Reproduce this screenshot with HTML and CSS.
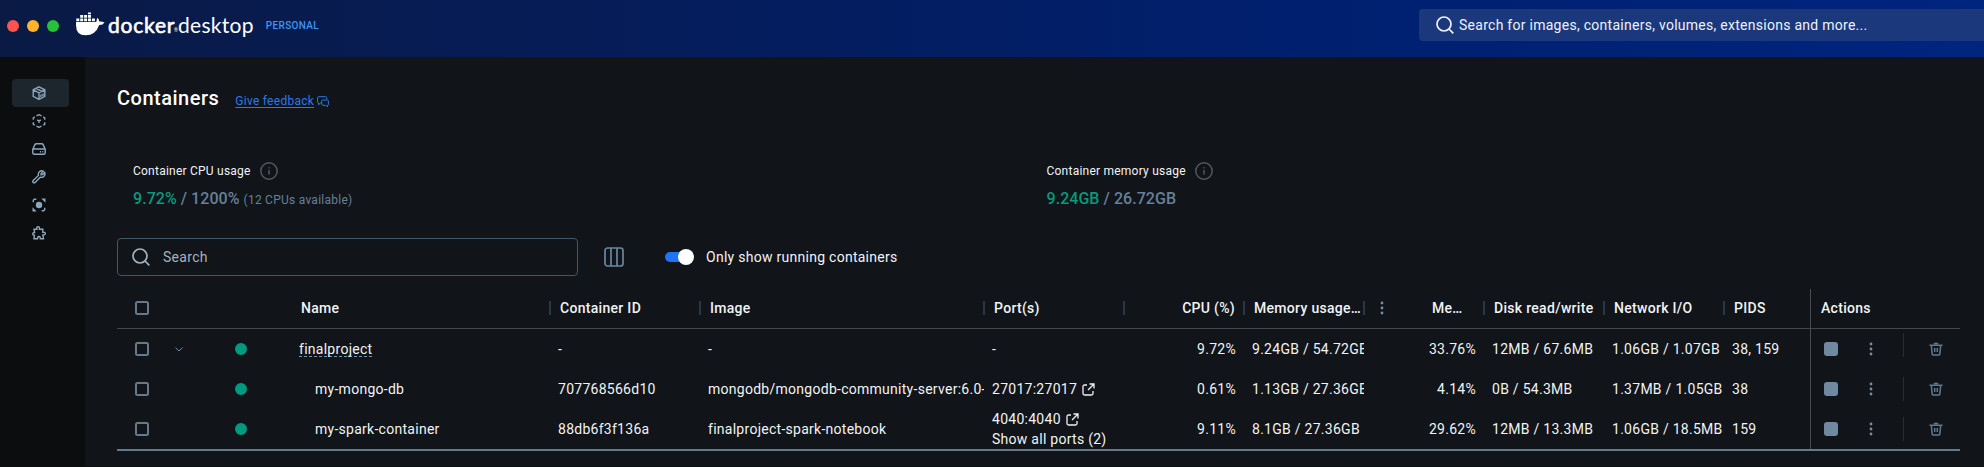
FILE: index.html
```html
<!DOCTYPE html>
<html lang="en">
<head>
<meta charset="utf-8">
<title>Docker Desktop</title>
<link rel="stylesheet" href="styles.css">
</head>
<body>
<svg class="defs" width="0" height="0">
  <symbol id="search" viewBox="0 0 18 18"><circle cx="8" cy="8" r="7"/><path d="M13 13l4.300 4.300"/></symbol>
  <symbol id="info" viewBox="0 0 18 18"><circle cx="9" cy="9" r="8.200"/><path d="M9 8v4.600M9 5.200v1.400"/></symbol>
  <symbol id="trash" viewBox="0 0 14 14"><path d="M.5 3.200h13M4.800 1.600h4.400M2.300 3l.8 8.600q.1 1.500 1.400 1.500h5q1.300 0 1.400-1.500L11.700 3M5.700 6v4M8.300 6v4"/></symbol>
  <symbol id="kebab" viewBox="0 0 4 14"><circle cx="2" cy="2" r="1.400"/><circle cx="2" cy="7" r="1.400"/><circle cx="2" cy="12" r="1.400"/></symbol>
  <symbol id="external" viewBox="0 0 13 13"><path d="M5 2H2.500Q1 2 1 3.500v7Q1 12 2.500 12h7q1.500 0 1.500-1.500V8M7.500 1H12v4.500M12 1L6 7"/></symbol>
</svg>

<header class="topbar">
  <div class="lights"><i class="red"></i><i class="amber"></i><i class="green"></i></div>
  <div class="brand">
    <svg class="whale" viewBox="0 0 29 24"><path d="M0 9h19.500q1.600-.5 1.300-2.600Q20.500 5.800 21.500 5q1.800 1.300 1.700 3.600 2.300-.4 5.300.8-1.600 2.600-5.300 2.500Q19.500 22.300 9.500 22.300 0 22.300 0 12z"/><path d="M.3 8.200h3v-2.700h-3zM4.200 8.200h3v-2.700h-3zM8.100 8.200h3v-2.700h-3zM12 8.200h3v-2.700h-3zM15.900 8.200h3v-2.700h-3zM4.200 4.700h3V2h-3zM8.100 4.700h3V2h-3zM12 4.700h3V2h-3zM12 1.300h3V-.4h-3z"/></svg>
    <span class="docker">docker</span><span class="reg">®</span><span class="desktop">desktop</span>
    <span class="plan">PERSONAL</span>
  </div>
  <div class="global-search"><svg class="ic"><use href="#search"/></svg><span>Search for images, containers, volumes, extensions and more...</span></div>
</header>

<div class="shell">
  <nav class="sidebar">
    <a class="active"><svg viewBox="0 0 14 14"><path d="M7 .8l5.800 3v6.600L7 13.400 1.200 10.400V3.800zM1.200 3.800L7 6.800l5.800-3M7 6.800v6.600M4 2.300l5.900 3"/><path d="M9 8.500v2.400M11 7.500v2.400"/></svg></a>
    <a><svg viewBox="0 0 14 14"><path d="M4.500 1.900L7 .7l2.500 1.200M11.200 2.900l1.500.9v2M12.700 8.300v2l-1.500.9M9.500 12.100L7 13.300l-2.500-1.200M2.800 11.200l-1.500-.9v-2M1.300 5.800v-2l1.500-.9M5.200 6L7 6.900 8.800 6M7 6.900V9"/></svg></a>
    <a><svg viewBox="0 0 14 14"><path d="M.8 7.200L2.900 2.600q.4-.9 1.300-.9h5.600q.9 0 1.300.9l2.100 4.600v3.500q0 1.500-1.500 1.500H2.300q-1.500 0-1.500-1.500zM.8 7h12.400M8 9.700h1M10.300 9.700h1"/></svg></a>
    <a><svg viewBox="0 0 14 14"><path d="M11.300 1.200Q8.800.2 7.200 1.900 5.800 3.300 6.500 5.400L1.200 10.500q-.9 1 0 1.900t1.900 0l5.200-5.200q2 .6 3.500-.8 1.800-1.700.9-4L10.500 4.600 9 4.800 9.200 3.300z"/></svg></a>
    <a><svg viewBox="0 0 14 14"><circle class="solid" cx="7" cy="7" r="3.200"/><path class="solid" d="M9.300.5h4.200v4.200zM.5 9.300v4.200h4.200z"/><path d="M1.300 4.200V2.200l1-.9h2M12.700 9.800v2l-1 .9h-2"/></svg></a>
    <a><svg viewBox="0 0 14 14"><path d="M2 3.200h2.900Q4.400.8 6.100.8T7.400 3.200h3.400v3q2.500-.2 2.500 1.300t-2.500 1.400l.7 3.800H8.300Q8.400 10.500 7 10.500T5.500 12.700H2l.4-3.400Q.6 9.100.7 7.800T2.600 6.500z"/></svg></a>
  </nav>

  <main>
    <div class="heading"><h1>Containers</h1><a class="feedback">Give feedback</a><svg class="chat" viewBox="0 0 12 12"><path d="M4.500 7H3.500L1.500 8.800V7Q.6 6.800.6 6V1.800Q.6.700 1.700.7h7Q9.800.7 9.800 1.800V3M5.800 4h4.500q1.100 0 1.100 1.100v3.200q0 1-1 1v1.600L8.800 9.300h-3q-1.100 0-1.100-1V5.100Q4.700 4 5.800 4z"/></svg></div>

    <section class="usage">
      <div><p class="label">Container CPU usage <svg><use href="#info"/></svg></p><p class="value"><b>9.72%</b> / 1200% <small>(12 CPUs available)</small></p></div>
      <div><p class="label">Container memory usage <svg><use href="#info"/></svg></p><p class="value"><b>9.24GB</b> / 26.72GB</p></div>
    </section>

    <div class="tools">
      <div class="search"><svg class="ic"><use href="#search"/></svg><span>Search</span></div>
      <svg class="columns" viewBox="0 0 20 20"><rect x="1" y="1" width="18" height="18" rx="2.500"/><path d="M7 1v18M13 1v18"/></svg>
      <span class="toggle"><i></i></span><span class="toggle-label">Only show running containers</span>
    </div>

    <div class="table">
      <div class="row head">
        <div><i class="box"></i></div><div></div><div></div><div class="sep name">Name</div><div class="sep">Container ID</div><div class="sep">Image</div><div class="sep">Port(s)</div><div class="sep num">CPU (%)</div><div class="sep mem">Memory usage…</div><div class="sep memp"><svg class="kebab"><use href="#kebab"/></svg><span>Me…</span></div><div class="sep">Disk read/write</div><div class="sep">Network I/O</div><div>PIDS</div><div class="act">Actions</div>
      </div>
      <div class="row">
        <div><i class="box"></i></div><div><svg class="chev" viewBox="0 0 8 5"><path d="M.5.6L4 4 7.500.6"/></svg></div><div><i class="dot"></i></div><div class="name"><span class="group">finalproject</span></div><div>-</div><div>-</div><div>-</div><div class="num">9.72%</div><div>9.24GB / 54.72GB</div><div class="num">33.76%</div><div>12MB / 67.6MB</div><div>1.06GB / 1.07GB</div><div>38, 159</div>
        <div class="act"><i class="stop"></i><svg class="kebab"><use href="#kebab"/></svg><i class="rule first"></i><svg class="trash"><use href="#trash"/></svg></div>
      </div>
      <div class="row">
        <div><i class="box"></i></div><div></div><div><i class="dot"></i></div><div class="name child">my-mongo-db</div><div>707768566d10</div><div>mongodb/mongodb-community-server:6.0-</div><div>27017:27017<svg class="ext"><use href="#external"/></svg></div><div class="num">0.61%</div><div>1.13GB / 27.36GB</div><div class="num">4.14%</div><div>0B / 54.3MB</div><div>1.37MB / 1.05GB</div><div>38</div>
        <div class="act"><i class="stop"></i><svg class="kebab"><use href="#kebab"/></svg><i class="rule"></i><svg class="trash"><use href="#trash"/></svg></div>
      </div>
      <div class="row">
        <div><i class="box"></i></div><div></div><div><i class="dot"></i></div><div class="name child">my-spark-container</div><div>88db6f3f136a</div><div>finalproject-spark-notebook</div><div class="ports"><span>4040:4040<svg class="ext"><use href="#external"/></svg></span><span>Show all ports (2)</span></div><div class="num">9.11%</div><div>8.1GB / 27.36GB</div><div class="num">29.62%</div><div>12MB / 13.3MB</div><div>1.06GB / 18.5MB</div><div>159</div>
        <div class="act"><i class="stop"></i><svg class="kebab"><use href="#kebab"/></svg><i class="rule"></i><svg class="trash"><use href="#trash"/></svg></div>
      </div>
    </div>
  </main>
</div>
</body>
</html>
```
FILE: styles.css
```css
* { box-sizing: border-box; }
body { margin: 0; height: 467px; overflow: hidden; background: #111418; color: #f0f3f5; font: 14px/20px Roboto, sans-serif; letter-spacing: .27px; display: flex; flex-direction: column; border-bottom: 1px solid #0b0d0f; }
svg { fill: none; stroke: currentColor; flex: none; }
.defs { position: absolute; }
p, h1 { margin: 0; }

.topbar { height: 57px; flex: none; display: flex; align-items: flex-start; background: linear-gradient(90deg, #0a1a45, #001f6e 65%, #00257f); }
.lights { display: flex; gap: 8px; padding: 20px 0 0 7px; }
.lights i { width: 12px; height: 12px; border-radius: 50%; }
.red { background: #ff544d; }
.amber { background: #ffb429; }
.green { background: #25c138; }
.brand { display: flex; align-items: flex-start; padding: 13px 0 0 17px; color: #fff; }
.whale { width: 29px; height: 24px; fill: #fff; stroke: none; overflow: visible; }
.docker, .desktop { font: 21px/24px Lato, sans-serif; letter-spacing: .3px; }
.docker { width: 66px; margin-left: 3px; letter-spacing: .8px; -webkit-text-stroke: .6px #fff; }
.reg { font-size: 5px; line-height: 34px; letter-spacing: 0; }
.plan { margin: 3px 0 0 12px; color: #3e94fb; font-size: 10px; font-weight: 500; line-height: 20px; letter-spacing: .35px; }
.global-search { margin: 9px 0 0 auto; width: 565px; height: 32px; display: flex; align-items: center; background: #1b387d; border-radius: 4px 0 0 4px; padding-left: 17px; gap: 5px; color: #eef2fa; }
.ic { width: 18px; height: 18px; stroke-width: 1.700; }

.shell { flex: 1; display: flex; min-height: 0; }
.sidebar { width: 85px; flex: none; background: #0c0d0f; padding: 22px 16px 0 12px; display: flex; flex-direction: column; color: #8ba6bd; }
.sidebar a { width: 57px; height: 28px; border-radius: 4px; display: flex; align-items: center; justify-content: center; padding-right: 3px; }
.sidebar .active { background: #1d262d; }
.sidebar svg { width: 14px; height: 14px; stroke-width: 1.400; }
.sidebar .solid { fill: currentColor; stroke: none; }

main { flex: 1; padding: 26px 24px 0 32px; min-width: 0; }
.heading { height: 30px; display: flex; align-items: center; }
h1 { font-size: 20px; font-weight: 500; line-height: 30px; color: #fff; letter-spacing: .5px; }
.feedback { color: #2a78f0; font-size: 12px; text-decoration: underline; text-underline-offset: 2px; margin: 6px 0 0 16px; }
.chat { width: 12px; height: 12px; color: #2a78f0; margin: 8px 0 0 3px; }

.usage { display: grid; grid-template-columns: 913.500px 1fr; padding: 47px 0 0 16px; height: 125px; }
.label { display: flex; align-items: center; font-size: 12px; height: 22px; gap: 9px; letter-spacing: .23px; }
.label svg { width: 18px; height: 18px; color: #55585b; stroke-width: 1.500; }
.value { color: #67809a; font-size: 16px; font-weight: 500; margin-top: 7px; letter-spacing: .05px; }
.value b { font-weight: 500; color: #079a7f; }
.value small { font-size: 12px; font-weight: 400; letter-spacing: .25px; }

.tools { height: 38px; display: flex; align-items: center; }
.search { width: 461px; height: 38px; border: 1px solid #405669; border-radius: 4px; display: flex; align-items: center; padding-left: 14px; gap: 13px; color: #a3b3c1; letter-spacing: .3px; }
.columns { width: 20px; height: 20px; color: #6a87a1; margin-left: 26px; stroke-width: 1.700; }
.toggle { width: 28px; height: 10px; border-radius: 5px; background: #2073f7; margin-left: 41px; display: flex; align-items: center; justify-content: flex-end; }
.toggle i { width: 16px; height: 16px; border-radius: 50%; background: #fff; margin-right: -1px; flex: none; }
.toggle-label { margin-left: 13px; }

.table { margin-top: 13px; width: 1843px; border-bottom: 2px solid #5f7a91; }
.row { height: 40px; display: grid; grid-template-columns: 50px 50px 74px 259px 150px 284px 140px 120px 120px 120px 120px 120px 86px 150px; }
.row > div { display: flex; align-items: center; padding-left: 8px; overflow: hidden; white-space: nowrap; min-width: 0; }
.head { border-bottom: 1px solid #44484c; font-weight: 500; letter-spacing: .3px; }
.row.head > div { padding-left: 10px; padding-bottom: 1px; overflow: visible; }
.row > div:first-child, .row.head > div:first-child { padding-left: 18px; }
.row > .num { justify-content: flex-end; padding-right: 8px; }
.row.head > .num { padding-right: 9px; }
.head .sep::after { content: ""; width: 2px; height: 14px; background: #293846; margin-left: auto; margin-right: -1px; flex: none; }
.row.head > .num::after { margin-left: 8px; margin-right: -10px; }
.row.head .memp { padding-left: 16px; }
.memp span { margin-left: 48px; }
.box { width: 14px; height: 14px; border: 2px solid #667889; border-radius: 2.500px; }
.chev { width: 8px; height: 5px; color: #718fa9; }
.dot { width: 12px; height: 12px; border-radius: 50%; background: #029a7f; margin-left: 10px; }
.row > .child { padding-left: 24px; }
.group { line-height: 14px; border-bottom: 1px dashed #7695b0; }
.ext { width: 13px; height: 13px; margin-left: 5px; stroke-width: 1.300; vertical-align: -2px; }
.row > .ports { flex-direction: column; align-items: flex-start; justify-content: center; }
.row .act { border-left: 1px solid #4a4d51; }
.kebab { width: 4px; height: 14px; fill: #718fa9; stroke: none; }
.stop { width: 14px; height: 14px; border-radius: 3px; background: #7089a1; margin-left: 5px; }
.act .kebab { margin-left: 31px; }
.rule { width: 1px; height: 24px; background: #292c30; margin-left: 30px; }
.rule.first { margin-top: -8px; }
.trash { width: 14px; height: 14px; color: #62798f; stroke-width: 1.500; margin-left: 25px; }
```
